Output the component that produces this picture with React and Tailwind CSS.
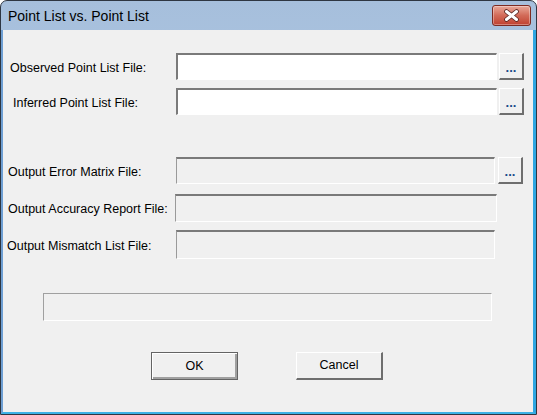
import React from 'react';

const sunkenWhite =
  'border-t-2 border-l-2 border-b border-r border-t-[#7a7a7a] border-l-[#7a7a7a] border-b-[#ffffff] border-r-[#ffffff] bg-white';
const sunkenGray =
  'border-t-2 border-l border-b border-r border-t-[#7a7a7a] border-l-[#9a9a9a] border-b-[#ffffff] border-r-[#ffffff] bg-[#f0f0f0]';

const BrowseButton = () => (
  <button
    type="button"
    className="ml-[2px] w-[25px] h-full shrink-0 bg-[#f0f0f0] border-t border-l border-b-2 border-r-2 border-t-white border-l-white border-b-[#6e6e6e] border-r-[#6e6e6e] flex items-center justify-center text-[13px] font-bold leading-none text-[#1a4a8a] pt-[2px]"
  >
    ...
  </button>
);

const Row = ({ label, labelPad, top, height, inputLeft, inputWidth, editable, browse }) => (
  <div className={`flex items-center ${top} ${height}`}>
    <div className={`${inputLeft} shrink-0 ${labelPad} text-[12.5px] text-black whitespace-nowrap pt-[3px]`}>
      {label}
    </div>
    <div className={`${inputWidth} h-full shrink-0 ${editable ? sunkenWhite : sunkenGray}`} />
    {browse ? <BrowseButton /> : null}
  </div>
);

const CloseButton = () => (
  <div className="w-[39px] h-[21px] rounded-[3px] border border-[#7d2b22] bg-gradient-to-b from-[#e8a899] via-[#d26a58] to-[#c0402f] flex items-center justify-center shadow-[inset_0_0_0_1px_rgba(255,255,255,0.35)]">
    <svg width="17" height="13" viewBox="0 0 17 13">
      <path d="M3.5 2.5 L13.5 10.5 M13.5 2.5 L3.5 10.5" stroke="#5a2a26" strokeWidth="4.6" strokeLinecap="round" />
      <path d="M3.5 2.5 L13.5 10.5 M13.5 2.5 L3.5 10.5" stroke="#ffffff" strokeWidth="3" strokeLinecap="round" />
    </svg>
  </div>
);

export default function App() {
  return (
    <div className="w-[537px] h-[415px] bg-white" style={{ fontFamily: '"Liberation Sans", Arial, sans-serif' }}>
      <div className="w-full h-full flex flex-col rounded-t-[7px] border border-[#2e3642] bg-gradient-to-b from-[#a6bfdc] to-[#bdd3ec] overflow-hidden">
        <div className="h-[29px] shrink-0 flex items-center justify-between pl-[7px] pr-[5px]">
          <div className="text-[14px] text-black pt-[1px]">Point List vs. Point List</div>
          <CloseButton />
        </div>
        <div className="flex-1 flex flex-col bg-[#f0f0f0] border-l-2 border-l-[#6f9fd3] border-r-[3px] border-r-[#2ea6e2] border-b-2 border-b-[#3cb2e6]">
          <Row
            label="Observed Point List File:"
            labelPad="pl-[7px]"
            top="mt-[23px]"
            height="h-[27px]"
            inputLeft="w-[173px]"
            inputWidth="w-[321px]"
            editable
            browse
          />
          <Row
            label="Inferred Point List File:"
            labelPad="pl-[10px]"
            top="mt-[8px]"
            height="h-[27px]"
            inputLeft="w-[173px]"
            inputWidth="w-[321px]"
            editable
            browse
          />
          <div className="flex items-center mt-[42px] h-[27px]">
            <div className="w-[173px] shrink-0 pl-[5px] text-[12.5px] text-black whitespace-nowrap pt-[3px]">
              Output Error Matrix File:
            </div>
            <div className={`w-[319px] h-full shrink-0 ${sunkenGray}`} />
            <div className="w-[1px] shrink-0" />
            <BrowseButton />
          </div>
          <Row
            label="Output Accuracy Report File:"
            labelPad="pl-[5px]"
            top="mt-[10px]"
            height="h-[28px]"
            inputLeft="w-[172px]"
            inputWidth="w-[322px]"
          />
          <Row
            label="Output Mismatch List File:"
            labelPad="pl-[4px]"
            top="mt-[8px]"
            height="h-[29px]"
            inputLeft="w-[173px]"
            inputWidth="w-[319px]"
          />
          <div className="mt-[34px] ml-[40px] w-[449px] h-[28px] border border-t-[#a0a0a0] border-l-[#a0a0a0] border-b-white border-r-white bg-[#f0f0f0]" />
          <div className="mt-[31px] flex">
            <button
              type="button"
              className="ml-[148px] w-[87px] h-[28px] bg-[#f0f0f0] border border-[#646464] shadow-[inset_1px_1px_0_#ffffff,inset_-2px_-2px_0_#a0a0a0] text-[12.5px] text-black"
            >
              OK
            </button>
            <button
              type="button"
              className="ml-[58px] w-[87px] h-[28px] bg-[#f0f0f0] border-t border-l border-b-2 border-r-2 border-t-white border-l-white border-b-[#6e6e6e] border-r-[#6e6e6e] text-[12.5px] text-black"
            >
              Cancel
            </button>
          </div>
        </div>
      </div>
    </div>
  );
}
